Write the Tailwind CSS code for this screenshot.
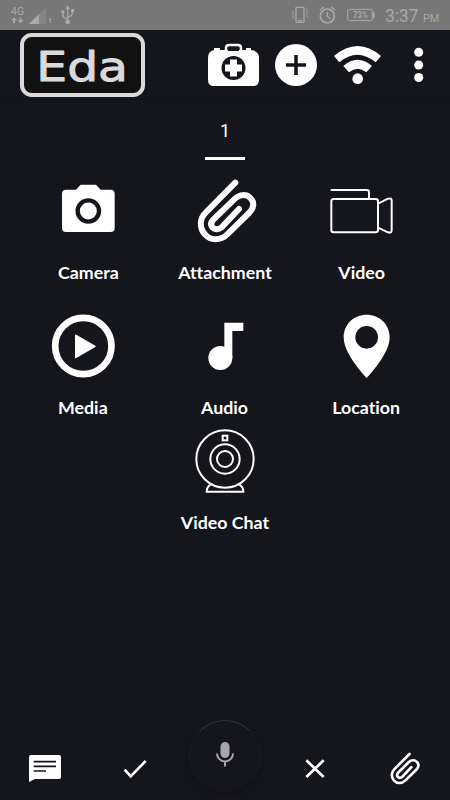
<!DOCTYPE html>
<html lang="en">
<head>
<meta charset="utf-8">
<title>Eda</title>
<script src="https://cdn.jsdelivr.net/npm/@tailwindcss/browser@4"></script>
</head>
<body class="bg-[#15151c]">
<main class="flex h-[800px] w-[450px] flex-col overflow-hidden bg-[#15151c] font-['Lato',sans-serif] text-white [font-variant-ligatures:none]">
  <div class="flex h-[30px] shrink-0 items-center justify-between bg-[#777777] font-['Roboto',sans-serif] text-[#a9a9a9]">
    <svg width="80" height="30" viewBox="0 0 240 90" fill="#a9a9a9">
      <text x="33" y="46" font-size="31" textLength="39" lengthAdjust="spacingAndGlyphs">4G</text>
      <path d="M42 52l9 9h-6v8h-6v-8h-6zM62 70l-9-9h6v-8h6v8h6z"/>
      <path d="M138 22v50H86z" fill="#858585"/><path d="M117 43v29H86z"/>
      <text x="145" y="70" font-size="19" font-weight="700">1</text>
      <g fill="none" stroke="#a9a9a9" stroke-width="4"><path d="M203 65V23M203 57q-14-2-14-12v-8M203 51q14-2 14-12v-7"/></g>
      <path d="M203 16l7 11h-14zM184 31h9v9h-9zM213 27h9v9h-9z"/><circle cx="203" cy="66" r="7"/>
    </svg>
    <svg width="160" height="30" viewBox="195 0 480 90" fill="#a9a9a9">
      <g fill="none" stroke="#a9a9a9" stroke-width="3">
        <rect x="213" y="22" width="24" height="45" rx="2" stroke-width="4"/><path d="M219 62h13" stroke-width="4"/>
        <path d="M206 32l-4 5 4 5-4 5 4 5-4 5M244 26l4 5-4 5 4 5-4 5 4 5" />
        <circle cx="307" cy="48" r="21" stroke-width="5"/><path d="M307 35v14l9 7M285 31l11-10M318 21l12 10" stroke-width="4"/>
        <rect x="368" y="28" width="74" height="34" rx="5"/>
      </g>
      <path d="M444 37h5v16h-5z"/>
      <text x="384" y="54" font-size="25" font-weight="700" textLength="44" lengthAdjust="spacingAndGlyphs">73%</text>
      <text x="481" y="66" font-size="54" textLength="99" lengthAdjust="spacingAndGlyphs">3:37</text>
      <text x="594" y="66" font-size="34" textLength="49" lengthAdjust="spacingAndGlyphs">PM</text>
    </svg>
  </div>

  <header class="flex h-[70px] shrink-0 items-start border-b border-[#111117] pl-5">
    <svg class="mt-[3px]" width="125" height="64" viewBox="60 99 375 192">
      <rect x="66" y="105" width="363" height="180" rx="29" fill="#111" stroke="#dadadc" stroke-width="12"/>
      <text x="109" y="242" font-family="'DejaVu Sans',sans-serif" font-size="122" font-weight="400" fill="#dadadc" stroke="#dadadc" stroke-width="3" stroke-linejoin="round" textLength="275" lengthAdjust="spacingAndGlyphs">Eda</text>
    </svg>
    <svg class="mt-[13px] ml-[63px]" width="51" height="44" viewBox="208 43 51 44">
      <path d="M214 50v-2h6v2h26v-2h5v2q8 1 8 8v22q0 6-6 6h-39q-6 0-6-6V58q0-7 6-8z" fill="#fff"/>
      <path d="M226 51v-3q0-3 3-3h9q3 0 3 3v3" fill="none" stroke="#fff" stroke-width="2.500"/>
      <path d="M228 49q0-2 2-2h7q2 0 2 2v2h-11z" fill="#15151c"/>
      <circle cx="233.500" cy="68" r="12" fill="#15151c"/>
      <path d="M230 59.500h7v5h5v7h-5v5h-7v-5h-5v-7h5z" fill="#fff"/>
    </svg>
    <svg class="mt-[13px] ml-4" width="43" height="44" viewBox="275 43 43 44">
      <circle cx="296" cy="65" r="21" fill="#fff"/><path d="M296 55v20M286 65h20" stroke="#15151c" stroke-width="3.500"/>
    </svg>
    <svg class="mt-[14px] ml-4" width="49" height="42" viewBox="327 132 147 126">
      <path d="M327 168q71-60 141 0l-16 19q-55-45-109 0zM355 198q43-37 86 0l-17 19q-26-21-52 0z" fill="#fff"/>
      <circle cx="398" cy="236" r="16" fill="#fff"/>
    </svg>
    <svg class="mt-[16px] ml-[29px]" width="12" height="38" viewBox="412 46 12 38" fill="#fff"><circle cx="418.700" cy="52.300" r="4.500"/><circle cx="418.700" cy="65" r="4.500"/><circle cx="418.700" cy="77.500" r="4.500"/></svg>
  </header>

  <nav class="flex h-[60px] shrink-0 justify-center shadow-[0_1px_0_#121219]">
    <div class="flex w-10 items-center justify-center border-b-[3px] border-white pt-1 text-[18px] font-['Roboto',sans-serif]">1</div>
  </nav>

  <section class="mt-[19px] flex flex-col">
    <div class="ml-5 grid h-[135px] w-[410px] grid-cols-3 text-[17.800px] leading-[22px] font-bold">
      <div class="flex flex-col items-center">
        <svg width="64" height="64" viewBox="48 27 192 192">
          <path d="M122 44h46l14 15h30q12 0 12 12v103q0 12-12 12H78q-12 0-12-12V71q0-12 12-12h30z" fill="#fff"/>
          <circle cx="145" cy="123" r="32" fill="none" stroke="#15151c" stroke-width="13"/>
        </svg>
        <span class="mt-[18px]">Camera</span>
      </div>
      <div class="flex flex-col items-center">
        <svg width="64" height="64" viewBox="69 27 192 192">
          <path d="M196 38L107 128C88 146 88 175 105 193C122 213 152 212 171 194L237 129C252 115 254 97 242 85C230 71 209 73 195 86L132 147C122 156 121 165 128 173C135 180 147 179 157 170L207 117" fill="none" stroke="#fff" stroke-width="18" stroke-linecap="round"/>
        </svg>
        <span class="mt-[18px]">Attachment</span>
      </div>
      <div class="flex flex-col items-center">
        <svg width="64" height="64" viewBox="60 27 192 192">
          <g fill="none" stroke="#fff" stroke-width="6" stroke-linejoin="round"><rect x="64" y="87" width="140" height="100" rx="7"/><path d="M62 60h108q7 0 7 7v20M204 101l30-15q11-3 11 6v89q0 9-11 6l-30-14"/></g>
        </svg>
        <span class="mt-[18px]">Video</span>
      </div>
    </div>
    <div class="ml-3 grid h-[115px] w-[425px] grid-cols-3 text-[17.800px] leading-[22px] font-bold">
      <div class="flex flex-col items-center">
        <svg width="64" height="64" viewBox="33 27 192 192">
          <circle cx="130" cy="123" r="84.500" fill="none" stroke="#fff" stroke-width="20"/><path d="M109 89l57 33q3 2 0 4l-57 33q-4 2-4-2V91q0-4 4-2z" fill="#fff"/>
        </svg>
        <span class="mt-[18px]">Media</span>
      </div>
      <div class="flex flex-col items-center">
        <svg width="64" height="64" viewBox="68 27 192 192">
          <circle cx="153" cy="159" r="36" fill="#fff"/><path d="M165 53h57v25h-33v81h-24z" fill="#fff"/>
        </svg>
        <span class="mt-[18px]">Audio</span>
      </div>
      <div class="flex flex-col items-center">
        <svg width="64" height="64" viewBox="72 27 192 192">
          <path fill-rule="evenodd" d="M170 29c-39 0-69 29-69 68 0 52 69 122 69 122s69-70 69-122c0-39-30-68-69-68zm0 34a34 34 0 1 1 0 68 34 34 0 0 1 0-68z" fill="#fff"/>
        </svg>
        <span class="mt-[18px]">Location</span>
      </div>
    </div>
    <div class="flex flex-col items-center text-[17.800px] leading-[22px] font-bold">
      <svg width="64" height="64" viewBox="69 27 192 192" fill="none" stroke="#fff" stroke-width="6">
        <circle cx="165" cy="117" r="86"/><circle cx="165" cy="117" r="44"/><circle cx="165" cy="117" r="24"/><rect x="158" y="47" width="14" height="14"/>
        <path d="M124 193q-14 6-14 22h110q0-16-14-22"/>
      </svg>
      <span class="mt-[18px]">Video Chat</span>
    </div>
  </section>

  <footer class="mt-auto flex h-[80px] items-end pl-7">
    <svg class="mb-[17px]" width="34" height="29" viewBox="84 162 102 87">
      <path d="M93 165h84q6 0 6 6v60q0 6-6 6h-72l-18 9v-75q0-6 6-6z" fill="#fff"/><path d="M101 185h67M101 199h67M101 213h37" stroke="#15151c" stroke-width="5"/>
    </svg>
    <svg class="mb-[20px] ml-[60px]" width="26" height="22" viewBox="366 174 78 66"><path d="M374 209l18 20 45-46" fill="none" stroke="#fff" stroke-width="8"/></svg>
    <div class="mb-[8px] ml-[41px] flex size-[72px] items-center justify-center rounded-full border border-x-[#1c1c23] border-b-transparent border-t-[#303037] shadow-[0_3px_5px_#121218]">
      <svg width="20" height="28" viewBox="215 742 20 28" fill="none" stroke="#a6a6ab" stroke-width="2"><rect x="221.500" y="743" width="7" height="14" rx="3.500" fill="#a6a6ab"/><path d="M217 753.500a8 8 0 0 0 16 0M225 761.500v5"/></svg>
    </div>
    <svg class="mb-[20px] ml-[43px]" width="22" height="22" viewBox="237 174 66 66"><path d="M244 181l52 50M296 181l-52 50" stroke="#fff" stroke-width="8"/></svg>
    <svg class="mb-[15px] ml-[62px]" width="32" height="33" viewBox="69 24 192 198">
      <path d="M198 36L106 128C88 146 87 175 104 194C122 215 153 215 172 196L240 129C254 115 256 97 243 84C230 69 208 71 194 84L131 147C122 156 121 165 128 173C135 182 147 180 157 171L209 115" fill="none" stroke="#fff" stroke-width="16" stroke-linecap="round"/>
    </svg>
  </footer>
</main>
</body>
</html>
